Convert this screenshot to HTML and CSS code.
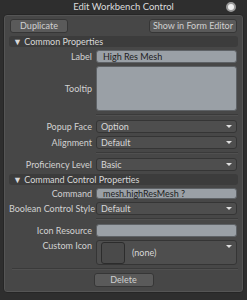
FILE: index.html
```html
<!DOCTYPE html>
<html lang="en">
<head>
    <meta charset="UTF-8">
    <title>Edit Workbench Control</title>
    <link rel="stylesheet" href="styles.css">
</head>
<body>
    <div class="window">
        <div class="titlebar">
            <span class="title">Edit Workbench Control</span>
            <span class="close"></span>
        </div>
        <div class="frame">
            <div class="toolbar">
                <button class="btn dup">Duplicate</button>
                <button class="btn">Show in Form Editor</button>
            </div>

            <div class="section">&#9660; Common Properties</div>
            <div class="row">
                <label>Label</label>
                <div class="field text">High Res Mesh</div>
            </div>
            <div class="row">
                <label>Tooltip</label>
                <div class="field text area"></div>
            </div>
            <div class="sep"></div>
            <div class="row">
                <label>Popup Face</label>
                <div class="field popup">Option</div>
            </div>
            <div class="row">
                <label>Alignment</label>
                <div class="field popup">Default</div>
            </div>
            <div class="sep"></div>
            <div class="row">
                <label>Proficiency Level</label>
                <div class="field popup">Basic</div>
            </div>

            <div class="section">&#9660; Command Control Properties</div>
            <div class="row">
                <label>Command</label>
                <div class="field text cmd">mesh.highResMesh ?</div>
            </div>
            <div class="row">
                <label>Boolean Control Style</label>
                <div class="field popup">Default</div>
            </div>
            <div class="sep"></div>
            <div class="row">
                <label>Icon Resource</label>
                <div class="field text"></div>
            </div>
            <div class="row top">
                <label>Custom Icon</label>
                <div class="field popup icon">
                    <span class="swatch"></span>
                    <span>(none)</span>
                </div>
            </div>
            <div class="sep wide"></div>
            <div class="footer">
                <button class="btn del">Delete</button>
            </div>
        </div>
    </div>
</body>
</html>
```

FILE: styles.css
```css
body {
    margin: 0;
    background: #2e2e2e;
    font-family: 'Lato', 'Liberation Sans', sans-serif;
    font-size: 9px;
    color: #d6d6d6;
}

.window {
    width: 247px;
    height: 300px;
    background: #2e2e2e;
}

.titlebar {
    height: 13px;
    position: relative;
    text-align: center;
    line-height: 13px;
    color: #dcdcdc;
    font-size: 9.5px;
}

.close {
    position: absolute;
    right: 11px;
    top: 2px;
    width: 6px;
    height: 6px;
    border-radius: 50%;
    background: #f0f0f0;
    border: 2px solid #9a9a9a;
}

.frame {
    margin: 1px 3px 0 3px;
    height: 279px;
    background: #474747;
    border: 1px solid #262626;
    border-radius: 4px;
    padding: 4px 5px 0 5px;
    box-sizing: border-box;
    box-shadow: inset 0 0 0 1px #555;
}

.toolbar {
    display: flex;
    justify-content: space-between;
    padding: 0 1px 0 1px;
    margin-bottom: 3px;
}

.btn {
    font: inherit;
    color: #d0d0d0;
    background: #5a5a5a;
    border: 1px solid #363636;
    border-radius: 3px;
    height: 14px;
    padding: 0 3px;
    line-height: 12px;
}

.btn.dup {
    width: 58px;
}

.section {
    height: 11px;
    line-height: 11px;
    background: #3c3c3c;
    border-radius: 3px;
    padding-left: 4px;
    margin: 0 0 3px 0;
    color: #d8d8d8;
}

.row {
    display: grid;
    grid-template-columns: 83px 1fr;
    column-gap: 4px;
    align-items: center;
    margin-bottom: 3px;
    padding-right: 1px;
}

.row.top {
    align-items: start;
}

.row label {
    text-align: right;
    color: #d2d2d2;
    white-space: nowrap;
}

.field {
    height: 13px;
    line-height: 12px;
    border-radius: 3px;
    box-sizing: border-box;
    padding-left: 4px;
    position: relative;
}

.text {
    background: #9aa0a6;
    border: 1px solid #5e6266;
    color: #1d1d1d;
    padding-left: 6px;
}

.text.cmd {
    height: 11px;
    line-height: 10px;
}

.area {
    height: 45px;
}

.popup {
    background: #4e4e4e;
    border: 1px solid #353535;
    color: #d8d8d8;
}

.popup::after {
    content: '';
    position: absolute;
    right: 4px;
    top: 4px;
    border-left: 3px solid transparent;
    border-right: 3px solid transparent;
    border-top: 3px solid #e0e0e0;
}

.icon {
    height: 25px;
    display: flex;
    align-items: center;
    gap: 7px;
    padding-left: 4px;
}

.swatch {
    width: 22px;
    height: 20px;
    background: #4a4a4a;
    border: 1px solid #2c2c2c;
    border-radius: 3px;
    margin-top: 1px;
}

.sep {
    height: 1px;
    background: #3a3a3a;
    margin: 1px 0 4px 87px;
    border-bottom: 1px solid #505050;
}

.sep.wide {
    margin: 1px 0 3px 3px;
}

.footer {
    display: flex;
    justify-content: center;
}

.btn.del {
    width: 60px;
}
```
